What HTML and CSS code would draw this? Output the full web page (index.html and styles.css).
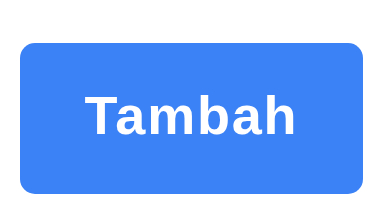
FILE: index.html
```html
<!DOCTYPE html>
<html>
<head>
<meta charset="utf-8">
<link rel="stylesheet" href="styles.css">
</head>
<body>
<div class="page">
  <button class="btn">Tambah</button>
</div>
</body>
</html>
```

FILE: styles.css
```css
html, body {
  margin: 0;
  padding: 0;
  background: #ffffff;
}
.page {
  padding: 43px 0 0 20px;
}
.btn {
  display: flex;
  align-items: center;
  justify-content: center;
  width: 343px;
  height: 151px;
  padding: 0 0 7px 0;
  border: none;
  border-radius: 15px;
  background: #3b82f6;
  color: #ffffff;
  font-family: "Liberation Sans", Arial, sans-serif;
  font-weight: bold;
  font-size: 54px;
  letter-spacing: 1.8px;
}
```
